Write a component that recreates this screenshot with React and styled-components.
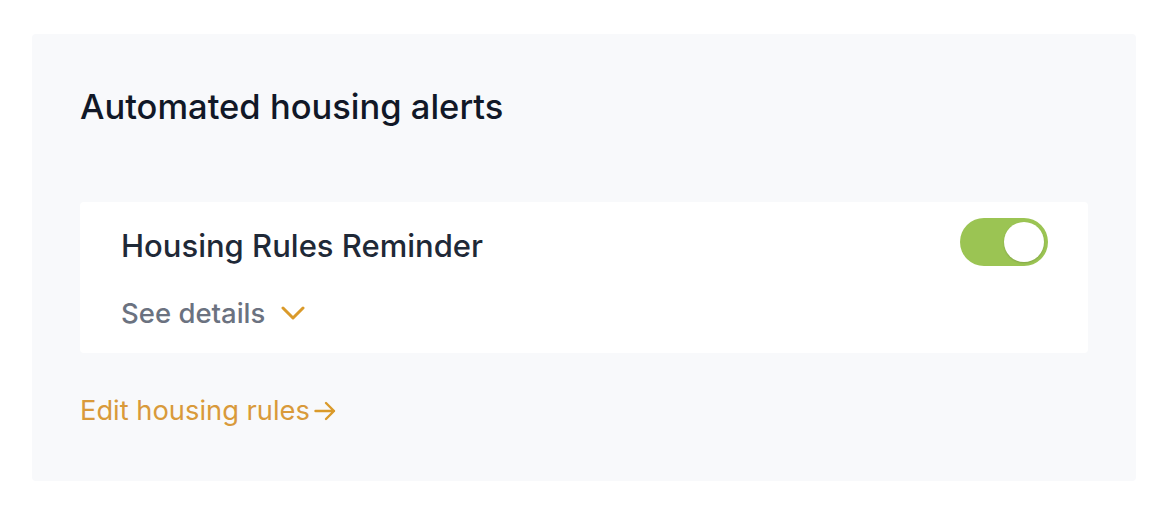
import React, { useState } from 'react';
import styled, { createGlobalStyle } from 'styled-components';

const GlobalStyle = createGlobalStyle`
  html, body {
    margin: 0;
    padding: 0;
    background: #ffffff;
    font-family: Inter, "Noto Sans", sans-serif;
  }
`;

const Page = styled.div`
  padding: 34px 34px 31px 32px;
`;

const Panel = styled.section`
  background: #f8f9fb;
  border-radius: 4px;
  padding: 53px 48px 48px 48px;
  height: 447px;
  box-sizing: border-box;
  display: flex;
  flex-direction: column;
`;

const Title = styled.h2`
  margin: 0;
  font-size: 34.5px;
  font-weight: 500;
  line-height: 40px;
  color: #111827;
`;

const AlertCard = styled.div`
  margin-top: 75px;
  background: #ffffff;
  border-radius: 4px;
  padding: 16px 40px 22px 41px;
  display: flex;
  justify-content: space-between;
  align-items: flex-start;
`;

const AlertInfo = styled.div`
  display: flex;
  flex-direction: column;
  gap: 21px;
`;

const AlertName = styled.div`
  font-size: 31px;
  font-weight: 500;
  color: #1f2937;
  line-height: 56px;
`;

const DetailsButton = styled.button`
  display: flex;
  align-items: center;
  gap: 16px;
  padding: 0;
  border: none;
  background: none;
  font-family: inherit;
  font-size: 27.5px;
  font-weight: 500;
  color: #6b7280;
  cursor: pointer;
  line-height: 36px;
`;

const Toggle = styled.button`
  width: 88px;
  height: 48px;
  border-radius: 24px;
  border: none;
  padding: 4px;
  background: ${(p) => (p.$on ? '#9bc453' : '#d1d5db')};
  display: flex;
  justify-content: ${(p) => (p.$on ? 'flex-end' : 'flex-start')};
  cursor: pointer;
`;

const Knob = styled.span`
  width: 40px;
  height: 40px;
  border-radius: 50%;
  background: #ffffff;
  box-shadow: 0 1px 2px rgba(0, 0, 0, 0.15);
`;

const EditLink = styled.a`
  margin-top: 40px;
  display: inline-flex;
  align-items: center;
  gap: 4px;
  font-size: 27.3px;
  color: #d99a3a;
  text-decoration: none;
  line-height: 36px;
`;

const ChevronDown = () => (
  <svg width="24" height="16" viewBox="0 0 24 16" fill="none" stroke="#da9a2a" strokeWidth="3" strokeLinecap="round" strokeLinejoin="round">
    <path d="M2 3l10 10 10-10" />
  </svg>
);

const ArrowRight = () => (
  <svg width="22" height="20" viewBox="0 0 22 20" fill="none" stroke="#da9a2a" strokeWidth="2.4" strokeLinecap="round" strokeLinejoin="round">
    <path d="M1.5 10h18.5M12 2l8 8-8 8" />
  </svg>
);

export default function App() {
  const [on, setOn] = useState(true);
  return (
    <Page>
      <GlobalStyle />
      <Panel>
        <Title>Automated housing alerts</Title>
        <AlertCard>
          <AlertInfo>
            <AlertName>Housing Rules Reminder</AlertName>
            <DetailsButton>
              See details
              <ChevronDown />
            </DetailsButton>
          </AlertInfo>
          <Toggle $on={on} onClick={() => setOn(!on)}>
            <Knob />
          </Toggle>
        </AlertCard>
        <div>
          <EditLink href="#">
            Edit housing rules
            <ArrowRight />
          </EditLink>
        </div>
      </Panel>
    </Page>
  );
}
